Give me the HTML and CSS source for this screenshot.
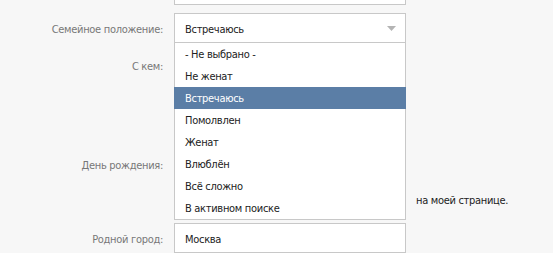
FILE: index.html
```html
<!DOCTYPE html>
<html lang="ru">
<head>
<meta charset="utf-8">
<link rel="stylesheet" href="styles.css">
</head>
<body>
<div class="form">
  <div class="row row-top">
    <div class="label"></div>
    <div class="field"><div class="input"></div></div>
  </div>
  <div class="row row-status">
    <div class="label">Семейное положение:</div>
    <div class="field">
      <div class="select">
        <span class="select-value">Встречаюсь</span>
        <svg class="arrow" width="9" height="5" viewBox="0 0 9 5"><path d="M0 0h9L4.5 5z" fill="#b4b4b4"/></svg>
      </div>
      <ul class="menu">
        <li class="item">- Не выбрано -</li>
        <li class="item">Не женат</li>
        <li class="item active">Встречаюсь</li>
        <li class="item">Помолвлен</li>
        <li class="item">Женат</li>
        <li class="item">Влюблён</li>
        <li class="item">Всё сложно</li>
        <li class="item">В активном поиске</li>
      </ul>
    </div>
  </div>
  <div class="row row-partner">
    <div class="label">С кем:</div>
    <div class="field"></div>
  </div>
  <div class="row row-bday">
    <div class="label">День рождения:</div>
    <div class="field"></div>
  </div>
  <div class="row row-show">
    <div class="label"></div>
    <div class="field"></div>
    <div class="note">на моей странице.</div>
  </div>
  <div class="row row-city">
    <div class="label">Родной город:</div>
    <div class="field"><div class="input">Москва</div></div>
  </div>
</div>
</body>
</html>
```
FILE: styles.css
```css
html, body {
  margin: 0;
  padding: 0;
  background: #f7f7f7;
  overflow: hidden;
}
body {
  font-family: "DejaVu Sans Condensed", "DejaVu Sans", Tahoma, sans-serif;
  font-stretch: condensed;
  font-size: 11px;
  letter-spacing: -0.3px;
  color: #222;
}
.form {
  display: flex;
  flex-direction: column;
  margin-top: -25px;
}
.row {
  display: flex;
  align-items: center;
  height: 30px;
  gap: 11px;
}
.label, .note {
  padding-top: 2px;
}
.label {
  width: 163px;
  flex: none;
  text-align: right;
  color: #777;
}
.field {
  width: 232px;
  flex: none;
  position: relative;
  height: 30px;
}
.input, .select {
  box-sizing: border-box;
  height: 30px;
  background: #fff;
  border: 1px solid #c8c8c8;
  padding: 2px 10px 0;
  display: flex;
  align-items: center;
}
.select {
  justify-content: space-between;
  padding-right: 9px;
}
.arrow { margin-top: -2px; }
.row-status { margin-top: 8px; }
.row-partner { margin-top: 7px; }
.row-bday { margin-top: 69px; }
.row-show { margin-top: 5px; }
.row-city { margin-top: 9px; }
.note {
  color: #222;
  margin-left: -1px;
}
.menu {
  position: absolute;
  top: 29px;
  left: 0;
  width: 232px;
  box-sizing: border-box;
  margin: 0;
  padding: 0;
  list-style: none;
  background: #fff;
  border: 1px solid #c8c8c8;
  z-index: 2;
}
.item {
  height: 22px;
  line-height: 24px;
  padding: 0 10px;
}
.item.active {
  background: #5b7ea6;
  color: #fff;
  margin: 0 -1px;
  padding: 0 11px;
}
```
